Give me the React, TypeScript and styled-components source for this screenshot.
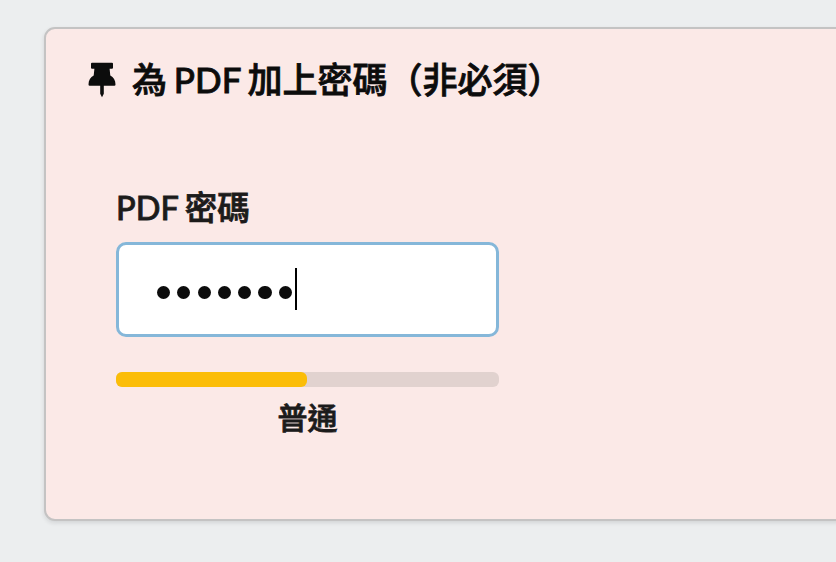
import React from 'react';
import styled, { createGlobalStyle } from 'styled-components';

const GlobalStyle = createGlobalStyle`
  * { box-sizing: border-box; }
  body {
    margin: 0;
    background: #eceeef;
    overflow: hidden;
    font-family: Lato, "Noto Sans CJK TC", sans-serif;
    font-weight: 500;
    color: #1c1b1b;
    -webkit-text-stroke: 0.8px currentColor;
  }
`;

const Page = styled.main`
  height: 562px;
  padding: 27px 0 0 44px;
  overflow: hidden;
`;

const Segment = styled.section`
  width: 900px;
  height: 494px;
  padding: 27px 42px;
  background: #fbe9e7;
  border: 2px solid #c4c3c3;
  border-radius: 11px;
  box-shadow: 0 2px 4px rgba(34, 36, 38, 0.12);
`;

const Header = styled.h2`
  display: flex;
  align-items: center;
  height: 48px;
  margin: 0;
  font-size: 35px;
  font-weight: 500;
  line-height: 48px;
  color: #0c0c0c;
  white-space: nowrap;
  word-spacing: -2px;
`;

const Title = styled.span`
  padding-bottom: 2px;
`;

const PinIcon = styled.svg`
  width: 28px;
  height: 36px;
  margin-right: 16px;
`;

const Form = styled.form`
  width: 383px;
  margin: 80px 0 0 28px;
`;

const Label = styled.label`
  display: block;
  height: 48px;
  margin-bottom: 10px;
  font-size: 32.5px;
  line-height: 48px;
  word-spacing: -1.5px;
`;

const Field = styled.div`
  display: flex;
  align-items: center;
  height: 95px;
  padding: 0 0 2px 38px;
  background: #fff;
  border: 3px solid #85b7d9;
  border-radius: 10px;
`;

const Dots = styled.div`
  display: flex;
  gap: 7.1px;
  padding-top: 8px;
`;

const Dot = styled.span`
  width: 13.2px;
  height: 13.2px;
  border-radius: 50%;
  background: #0c0c0c;
`;

const Caret = styled.span`
  width: 2px;
  height: 42px;
  margin-left: 3px;
  background: #000;
`;

const Track = styled.div`
  height: 15px;
  margin-top: 35px;
  border-radius: 6px;
  background: #e1d2cf;
`;

const Bar = styled.div`
  width: 191px;
  height: 100%;
  border-radius: 6px;
  background: #fbbd08;
`;

const Strength = styled.div`
  margin-top: 8px;
  font-size: 30px;
  line-height: 44px;
  text-align: center;
`;

export default function App() {
  return (
    <>
      <GlobalStyle />
      <Page>
        <Segment>
          <Header>
            <PinIcon viewBox="0 0 28 36">
              <path
                fill="currentColor"
                stroke="none"
                d="M4 .7h20q1 0 1 1v4q0 1-1 1H21.600l.7 6.800c3.200 1.500 5.200 4.800 5.200 9q0 1.200-1.200 1.200H15.800v8L14 35.200l-1.800-3.500v-8H1.700Q.5 23.700.5 22.500c0-4.200 2-7.500 5.200-9l.7-6.800H4q-1 0-1-1v-4Q3 .7 4 .7z"
              />
            </PinIcon>
            <Title>為 PDF 加上密碼（非必須）</Title>
          </Header>
          <Form>
            <Label>PDF 密碼</Label>
            <Field>
              <Dots>{Array.from({ length: 7 }, (_, i) => <Dot key={i} />)}</Dots>
              <Caret />
            </Field>
            <Track><Bar /></Track>
            <Strength>普通</Strength>
          </Form>
        </Segment>
      </Page>
    </>
  );
}
